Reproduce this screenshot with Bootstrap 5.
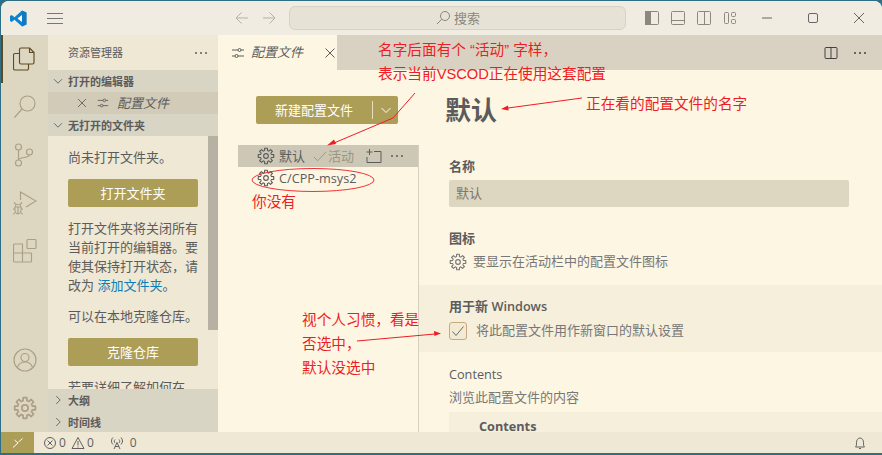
<!DOCTYPE html>
<html lang="zh-CN">
<head>
<meta charset="utf-8">
<title>配置文件</title>
<link href="https://cdn.jsdelivr.net/npm/bootstrap@5.3.0/dist/css/bootstrap.min.css" rel="stylesheet">
<style>
html,body{height:100%;}
body{background:#2f6f86;overflow:hidden;font-family:"Open Sans","Noto Sans CJK SC",sans-serif;font-size:13px;color:#5c5c5c;line-height:19px;}
.vs-win{position:relative;height:452px;margin:1px 0 0 1px;border-radius:8px 8px 0 0;overflow:hidden;background:#fdf6e3;}
.vs-title{height:34px;background:#f0ece2;flex:none;white-space:nowrap;}
.vs-ic{display:block;flex:none;fill:none;stroke:currentColor;stroke-width:1;}
.vs-logo{margin-left:9px;width:17px;height:17px;}
.vs-menu{margin-left:20px;color:#777;}
.vs-nav{margin-left:172px;gap:13px;color:#b5b1a7;width:42px;}
.vs-search{margin-left:12px;width:337px;height:24px;background:#e6e2d6;border:1px solid #d6d2c6;border-radius:6px;color:#8a867c;gap:3px;}
.vs-lay{margin-left:18px;gap:10px;color:#8c887e;}
.vs-lay svg{width:16px;height:16px;}
.vs-ctl{margin-left:auto;color:#666;}
.vs-ctl span{width:46px;display:flex;justify-content:center;}
.vs-main{min-height:0;}
.vs-act{width:47px;background:#ddd6c1;color:#ac9f87;flex:none;position:relative;}
.vs-act-on{position:absolute;left:0;top:0;width:2px;height:48px;background:#5f4a22;}
.vs-act-i{height:48px;display:flex;align-items:center;justify-content:center;}
.vs-act-i svg{width:24px;height:24px;stroke-width:1.15;}
.vs-act-first{color:#5f4a22;}
.vs-side{width:170px;background:#eee8d5;flex:none;white-space:normal;}
.vs-side-h{height:35px;padding:0 9px 0 20px;font-size:11px;flex:none;}
.vs-sec{height:22px;background:#d9d5c4;font-size:11px;font-weight:700;color:#5c5c5c;flex:none;padding-left:3px;gap:3px;}
.vs-sec svg{width:14px;height:14px;}
.vs-open{height:22px;background:#d1cbb8;font-size:13px;font-style:italic;padding-left:27px;flex:none;gap:7px;}
.vs-open svg{width:14px;height:14px;flex:none;font-style:normal;}
.vs-sbody{height:253px;overflow:hidden;position:relative;padding:12px 20px 0 20px;flex:none;}
.vs-sbody p{margin:0;}
.vs-sbar{position:absolute;right:0;top:0;width:10px;height:194px;background:#b7b1a3;}
.vs-btn{background:#ac9d57;color:#fff;border:0;border-radius:2px;font-size:13px;height:28px;padding:0;line-height:28px;}
.vs-btn:hover{background:#ac9d57;color:#fff;}
.vs-side .vs-btn{display:block;width:130px;}
.vs-p1{margin-top:12px!important;}
.vs-p2{margin-top:12px!important;}
.vs-link{color:#0a7fb5;text-decoration:none;}
.vs-ed{min-width:0;background:#fdf6e3;}
.vs-tabs{height:35px;background:#d9d2c2;flex:none;}
.vs-tab{width:119px;background:#fdf6e3;font-style:italic;padding-left:12px;gap:5px;white-space:nowrap;flex:none;}
.vs-tab svg{width:16px;height:16px;flex:none;}
.vs-tabx{margin-left:14px;}
.vs-tacts{margin-left:auto;padding-right:14px;gap:13px;color:#424242;}
.vs-tacts svg{width:16px;height:16px;}
.vs-prof{min-height:0;}
.vs-pl{width:200px;flex:none;padding-top:26px;white-space:nowrap;}
.vs-new{margin-left:38px;width:142px;display:flex;align-items:center;}
.vs-new span:first-child{width:116px;text-align:center;}
.vs-new i{display:block;width:1px;height:18px;background:#e6dfb9;}
.vs-new svg{width:16px;height:16px;margin-left:5px;}
.vs-plist{margin-top:21px;margin-left:20px;}
.vs-row{height:22px;padding-left:19px;gap:4px;}
.vs-row svg{width:18px;height:18px;flex:none;}
.vs-row-on{background:#cdc8b6;}
.vs-ac{color:#9a9684;gap:0;margin-left:4px;}
.vs-ac svg{width:15px;height:15px;}
.vs-row-acts{margin-left:auto;padding-right:13px;gap:7px;}
.vs-row-acts svg{width:16px;height:16px;}
.vs-lat{font-size:12.7px;}
.vs-pr{min-width:0;position:relative;overflow:hidden;}
.vs-divider{position:absolute;left:0;top:75px;bottom:0;width:1px;background:#d7d2bf;}
.vs-h1{font-size:26px;font-weight:700;line-height:32px;margin:24px 0 0 27px;color:#5b5b5b;}
.vs-f{padding:0 32px 0 31px;}
.vs-lab{font-weight:600;color:#5c5c5c;line-height:18px;}
.vs-name{margin-top:5px;width:400px;height:27px;background:#ddd6c1;border:0;border-radius:2px;padding:0 7px;font-size:13px;color:#7c7868;display:flex;align-items:center;}
.vs-gap-a{margin-top:31px;}
.vs-gap-b{margin-top:22px;}
.vs-gap-c{margin-top:13px;}
.vs-line{margin-top:5px;gap:6px;}
.vs-line2{margin-top:6px;gap:9px;}
.vs-plain{font-weight:400;}
.vs-mt5{margin-top:5px;}
.vs-use{background:#f6efdc;height:67px;margin-top:14px;padding-top:12px;}
.vs-chk{width:18px;height:18px;border:1px solid #c9a97d;border-radius:3px;background:#f3ead3;flex:none;color:#6a6a6a;}
.vs-chk svg{width:16px;height:16px;display:block;}
.vs-desc{color:#777;}
.vs-tb{margin:5px 0 0 31px;background:#f5efdc;height:21px;padding:8px 30px 0;font-weight:700;line-height:13px;}
.vs-status{height:21px;background:#eee8d5;flex:none;font-size:12px;color:#616161;}
.vs-rem{width:33px;height:21px;background:#ac9d57;color:#fff;flex:none;}
.vs-status svg{width:14px;height:14px;flex:none;}
.vs-stat{padding-left:9px;gap:2px;}
.vs-warn{margin-left:3px;}
.vs-ant{margin-left:14px;}
.vs-bell{margin-left:auto;margin-right:15px;}
.vs-note{position:absolute;color:#ee1c25;font-size:14.67px;line-height:24px;white-space:nowrap;margin:0;font-family:"Liberation Sans","Noto Sans CJK SC",sans-serif;}
.vs-over{position:absolute;left:-1px;top:-1px;pointer-events:none;}
</style>
</head>
<body>
<svg width="0" height="0" class="position-absolute">
<defs>
<g id="t"><path d="M4.62-1.91L4.83-1.29L6.89-1.22L6.89 1.22L4.83 1.29L4.62 1.91" stroke-linejoin="round"/></g>
<symbol id="gear" viewBox="-8 -8 16 16">
<use href="#t"/><use href="#t" transform="rotate(45)"/><use href="#t" transform="rotate(90)"/><use href="#t" transform="rotate(135)"/><use href="#t" transform="rotate(180)"/><use href="#t" transform="rotate(225)"/><use href="#t" transform="rotate(270)"/><use href="#t" transform="rotate(315)"/>
<circle r="2.1"/>
</symbol>
<symbol id="sl" viewBox="0 0 16 16"><path d="M2 5h6M11 5h3M2 11h3M8 11h6"/><circle cx="9.5" cy="5" r="1.5"/><circle cx="6.5" cy="11" r="1.5"/></symbol>
<symbol id="cd" viewBox="0 0 16 16"><path d="M3.5 6l4.5 4.5 4.5-4.5"/></symbol>
<symbol id="cr" viewBox="0 0 16 16"><path d="M6 3.5l4.5 4.5L6 12.5"/></symbol>
<symbol id="x" viewBox="0 0 16 16"><path d="M3.5 3.5l9 9M12.5 3.5l-9 9"/></symbol>
<symbol id="dots" viewBox="0 0 16 16"><g fill="currentColor" stroke="none"><circle cx="3" cy="8" r="1"/><circle cx="8" cy="8" r="1"/><circle cx="13" cy="8" r="1"/></g></symbol>
<symbol id="split" viewBox="0 0 16 16"><rect x="2" y="2.5" width="12" height="11" rx="1"/><path d="M8 2.5v11"/></symbol>
</defs>
</svg>

<div class="vs-win d-flex flex-column">
  <header class="vs-title d-flex align-items-center">
    <svg class="vs-logo" viewBox="0 0 17 17"><path fill="#0a84d0" d="M12 .5L16.5 2.6v11.8L12 16.5 4.5 9.700 1.700 12 0 11V6l1.700-1 2.800 2.300z"/><path fill="#fdfdfd" d="M12 5L7.500 8.500 12 12z"/><path fill="#1a6fb0" d="M12 .5L16.500 2.600v11.800L12 16.500z" opacity=".55"/></svg>
    <svg class="vs-ic vs-menu" width="16" height="16" viewBox="0 0 16 16"><path d="M0 3.500h16M0 8.500h16M0 13.500h16"/></svg>
    <div class="vs-nav d-flex">
      <svg class="vs-ic" width="14" height="14" viewBox="0 0 14 14"><path d="M13 7H1M6.500 1.500L1 7l5.500 5.500"/></svg>
      <svg class="vs-ic" width="14" height="14" viewBox="0 0 14 14"><path d="M1 7h12M7.500 1.500L13 7l-5.500 5.500"/></svg>
    </div>
    <div class="vs-search d-flex align-items-center justify-content-center">
      <svg class="vs-ic" width="16" height="16" viewBox="0 0 16 16"><circle cx="10" cy="6" r="4.500"/><path d="M6.700 9.300L2 14"/></svg><span>搜索</span>
    </div>
    <div class="vs-lay d-flex">
      <svg class="vs-ic" viewBox="0 0 16 16"><rect x="1.500" y="1.500" width="13" height="13" rx="1"/><rect x="1.500" y="1.500" width="5" height="13" fill="currentColor"/></svg>
      <svg class="vs-ic" viewBox="0 0 16 16"><rect x="1.500" y="1.500" width="13" height="13" rx="1"/><path d="M1.500 10.500h13"/></svg>
      <svg class="vs-ic" viewBox="0 0 16 16"><rect x="1.500" y="1.500" width="13" height="13" rx="1"/><path d="M8.500 1.500v13"/></svg>
      <svg class="vs-ic" viewBox="0 0 16 16"><rect x="2.500" y="2.500" width="4" height="11" rx="1"/><rect x="9.500" y="2.500" width="4" height="4" rx="1"/><rect x="9.500" y="9.500" width="4" height="4" rx="1"/></svg>
    </div>
    <div class="vs-ctl d-flex">
      <span><svg class="vs-ic" width="12" height="12" viewBox="0 0 12 12"><path d="M1 6h10"/></svg></span>
      <span><svg class="vs-ic" width="12" height="12" viewBox="0 0 12 12"><rect x="1.500" y="1.500" width="9" height="9" rx="1.500"/></svg></span>
      <span><svg class="vs-ic" width="12" height="12" viewBox="0 0 12 12"><path d="M1 1l10 10M11 1L1 11"/></svg></span>
    </div>
  </header>

  <div class="vs-main d-flex flex-grow-1">
    <nav class="vs-act d-flex flex-column">
      <i class="vs-act-on"></i>
      <div class="vs-act-i vs-act-first"><svg class="vs-ic" viewBox="0 0 24 24"><path d="M8 1h8.500L21 5.500V15.500a1.500 1.500 0 0 1-1.500 1.500H8a1.500 1.500 0 0 1-1.500-1.500V2.500A1.500 1.500 0 0 1 8 1zM16.500 1v4.500H21" stroke-linejoin="round"/><path d="M6.500 6.500H2a1.500 1.500 0 0 0-1.500 1.500v13.500A1.500 1.500 0 0 0 2 23h12a1.500 1.500 0 0 0 1.500-1.500V17" stroke-linejoin="round"/></svg></div>
      <div class="vs-act-i"><svg class="vs-ic" viewBox="0 0 24 24"><circle cx="14.500" cy="8.500" r="7.500"/><path d="M9 14L1.500 22.500"/></svg></div>
      <div class="vs-act-i"><svg class="vs-ic" viewBox="0 0 24 24"><circle cx="5.500" cy="4" r="3"/><circle cx="5.500" cy="20" r="3"/><circle cx="16.500" cy="9" r="3"/><path d="M5.500 7v10M16.500 12c0 3-11 2-11 5"/></svg></div>
      <div class="vs-act-i"><svg class="vs-ic" viewBox="0 0 24 24"><path d="M7.500 9V1l15.500 9-10 6"/><ellipse cx="5" cy="18" rx="3.200" ry="4.800"/><path d="M1.800 16h6.400M5 16v6.800M3 13.500L1 11.500M7 13.500l2-2M0 18h1.800M8.200 18H10M2 21.500L.3 23.500M8 21.500l1.700 2"/></svg></div>
      <div class="vs-act-i"><svg class="vs-ic" viewBox="0 0 24 24"><path d="M1.500 5h8v18h-8a1 1 0 0 1-1-1V6a1 1 0 0 1 1-1zM.5 14h18M9.500 23h8a1 1 0 0 0 1-1v-8"/><rect x="14" y=".5" width="9" height="9" rx="1"/></svg></div>
      <div class="mt-auto vs-act-i"><svg class="vs-ic" viewBox="0 0 24 24"><circle cx="12" cy="12" r="11"/><circle cx="12" cy="9.500" r="4"/><path d="M4.500 19.500c1-3.500 4-5.500 7.500-5.500s6.500 2 7.500 5.500"/></svg></div>
      <div class="vs-act-i"><svg class="vs-ic" viewBox="0 0 16 16"><use href="#gear"/></svg></div>
    </nav>

    <aside class="vs-side d-flex flex-column">
      <div class="vs-side-h d-flex align-items-center justify-content-between"><span>资源管理器</span><svg class="vs-ic" width="16" height="16"><use href="#dots"/></svg></div>
      <div class="vs-sec d-flex align-items-center"><svg class="vs-ic"><use href="#cd"/></svg><span>打开的编辑器</span></div>
      <div class="vs-open d-flex align-items-center"><svg class="vs-ic"><use href="#x"/></svg><svg class="vs-ic"><use href="#sl"/></svg><span>配置文件</span></div>
      <div class="vs-sec d-flex align-items-center"><svg class="vs-ic"><use href="#cd"/></svg><span>无打开的文件夹</span></div>
      <div class="vs-sbody">
        <i class="vs-sbar"></i>
        <p>尚未打开文件夹。</p>
        <button class="btn vs-btn vs-p1" type="button">打开文件夹</button>
        <p class="vs-p1">打开文件夹将关闭所有当前打开的编辑器。要使其保持打开状态，请改为 <a class="vs-link" href="#">添加文件夹</a>。</p>
        <p class="vs-p2">可以在本地克隆仓库。</p>
        <button class="btn vs-btn vs-p1" type="button">克隆仓库</button>
        <p class="vs-p1">若要详细了解如何在</p>
      </div>
      <div class="vs-sec d-flex align-items-center"><svg class="vs-ic"><use href="#cr"/></svg><span>大纲</span></div>
      <div class="vs-sec d-flex align-items-center"><svg class="vs-ic"><use href="#cr"/></svg><span>时间线</span></div>
    </aside>

    <main class="vs-ed d-flex flex-column flex-grow-1">
      <div class="vs-tabs d-flex">
        <div class="vs-tab d-flex align-items-center"><svg class="vs-ic"><use href="#sl"/></svg><span>配置文件</span><svg class="vs-ic vs-tabx" width="16" height="16"><use href="#x"/></svg></div>
        <div class="vs-tacts d-flex align-items-center"><svg class="vs-ic"><use href="#split"/></svg><svg class="vs-ic"><use href="#dots"/></svg></div>
      </div>
      <div class="vs-prof d-flex flex-grow-1">
        <div class="vs-pl">
          <button class="btn vs-btn vs-new" type="button"><span>新建配置文件</span><i></i><svg class="vs-ic"><use href="#cd"/></svg></button>
          <div class="vs-plist">
            <div class="vs-row vs-row-on d-flex align-items-center">
              <svg class="vs-ic"><use href="#gear"/></svg><span>默认</span>
              <span class="vs-ac d-flex align-items-center"><svg class="vs-ic" viewBox="0 0 16 16"><path d="M1 8.500l4 4L14 3"/></svg>活动</span>
              <span class="vs-row-acts d-flex align-items-center"><svg class="vs-ic" viewBox="0 0 16 16"><path d="M3.500 1v6M.5 4h6M8 3.500h7v11H1V9"/></svg><svg class="vs-ic"><use href="#dots"/></svg></span>
            </div>
            <div class="vs-row d-flex align-items-center"><svg class="vs-ic"><use href="#gear"/></svg><span class="vs-lat">C/CPP-msys2</span></div>
          </div>
        </div>
        <div class="vs-pr flex-grow-1">
          <i class="vs-divider"></i>
          <h1 class="vs-h1">默认</h1>
          <div class="vs-f vs-gap-a"><div class="vs-lab">名称</div><div class="vs-name">默认</div></div>
          <div class="vs-f vs-gap-b"><div class="vs-lab">图标</div>
            <div class="d-flex align-items-center vs-desc vs-line"><svg class="vs-ic" width="18" height="18"><use href="#gear"/></svg><span>要显示在活动栏中的配置文件图标</span></div></div>
          <div class="vs-use vs-f"><div class="vs-lab">用于新 <span class="vs-lat">Windows</span></div>
            <div class="d-flex align-items-center vs-desc vs-line2"><span class="vs-chk"><svg class="vs-ic" viewBox="0 0 16 16"><path d="M2.500 8.500l3.500 4 7.500-9"/></svg></span><span>将此配置文件用作新窗口的默认设置</span></div></div>
          <div class="vs-f vs-gap-c"><div class="vs-lab vs-plain"><span class="vs-lat">Contents</span></div><div class="vs-desc vs-mt5">浏览此配置文件的内容</div></div>
          <div class="vs-tb"><span class="vs-lat">Contents</span></div>
        </div>
      </div>
    </main>
  </div>

  <footer class="vs-status d-flex align-items-center">
    <div class="vs-rem d-flex align-items-center justify-content-center"><svg class="vs-ic" viewBox="0 0 14 14" stroke-width="1.400"><path d="M2 11.500l5-4.500-3.500-3M11.500 2.500L7.500 6"/></svg></div>
    <div class="vs-stat d-flex align-items-center"><svg class="vs-ic" viewBox="0 0 14 14"><circle cx="7" cy="7" r="5.500"/><path d="M4.500 4.500l5 5M9.500 4.500l-5 5"/></svg><span>0</span><svg class="vs-ic vs-warn" viewBox="0 0 14 14"><path d="M7 1.500L13 12.500H1zM7 5v4.500M7 10.500v1"/></svg><span>0</span><svg class="vs-ic vs-ant" viewBox="0 0 14 14"><path d="M7 6.500L4 13M7 6.500L10 13M5 10.500h4M3 1.500c-2 2-2 5 0 7M11 1.500c2 2 2 5 0 7M5 3.500c-1 1-1 2.500 0 3.500M9 3.500c1 1 1 2.500 0 3.500"/></svg><span class="ms-1">0</span></div>
    <svg class="vs-ic vs-bell" viewBox="0 0 14 14"><path d="M2.500 11c1-1 1-2 1-4.500S5 2 7 2s3.500 2 3.500 4.500 0 3.500 1 4.500zM6 12.500h2"/></svg>
  </footer>

  <p class="vs-note" style="left:377px;top:37px">名字后面有个 “活动” 字样，</p>
  <p class="vs-note" style="left:377px;top:61px">表示当前VSCOD正在使用这套配置</p>
  <p class="vs-note" style="left:585px;top:91px">正在看的配置文件的名字</p>
  <p class="vs-note" style="left:251px;top:189px">你没有</p>
  <p class="vs-note" style="left:301px;top:307px">视个人习惯，看是</p>
  <p class="vs-note" style="left:301px;top:331px">否选中，</p>
  <p class="vs-note" style="left:301px;top:355px">默认没选中</p>
  <svg class="vs-over" width="882" height="455" viewBox="0 0 882 455" fill="none" stroke="#ee1c25">
    <path d="M415 93L393 118L334 143"/><path fill="#ee1c25" stroke="none" d="M327 145.500l7-6 2 4.500z"/>
    <path d="M582 98L508 108"/><path fill="#ee1c25" stroke="none" d="M501 109l7-3.500.6 5z"/>
    <ellipse cx="313" cy="180" rx="61" ry="11.500" stroke-width=".9"/>
    <path d="M357 341L435 334"/><path fill="#ee1c25" stroke="none" d="M441 333.500l-7-2.500.4 5z"/>
  </svg>
</div>
<script src="https://cdn.jsdelivr.net/npm/bootstrap@5.3.0/dist/js/bootstrap.bundle.min.js"></script>
</body>
</html>
